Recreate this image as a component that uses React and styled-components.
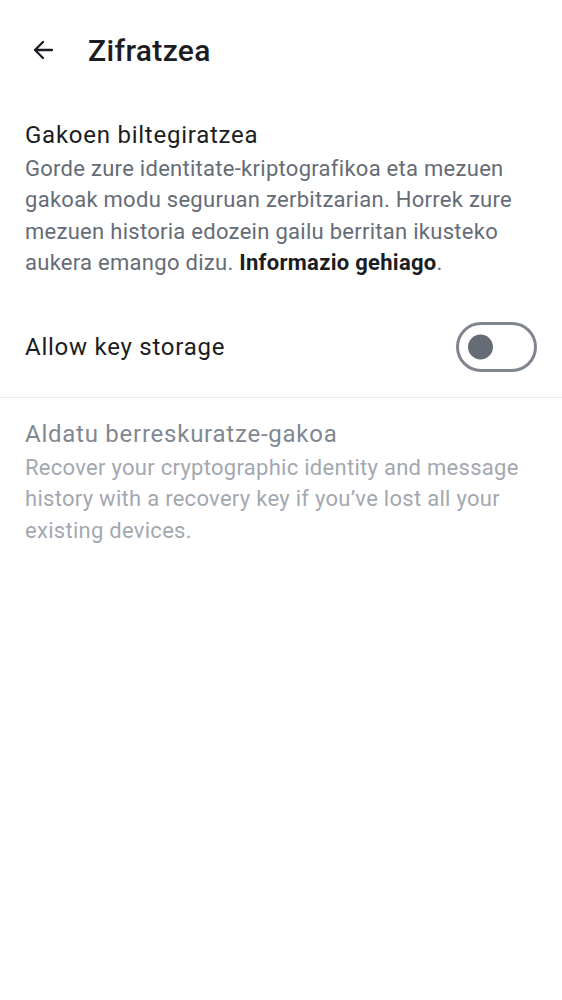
import React, { useState } from "react";
import styled, { createGlobalStyle } from "styled-components";

const GlobalStyle = createGlobalStyle`
  html, body {
    margin: 0;
    padding: 0;
    background: #ffffff;
  }
  body {
    font-family: Roboto, "Noto Sans", sans-serif;
    color: #1b1d22;
  }
`;

export default function App() {
  const [allowStorage, setAllowStorage] = useState(false);

  return (
    <Screen>
      <GlobalStyle />
      <TopBar>
        <BackButton aria-label="Back">
          <svg width="24" height="24" viewBox="0 0 24 24" fill="none">
            <path
              d="M21 12H4M12 4l-8 8 8 8"
              stroke="#1b1d22"
              strokeWidth="2.3"
              strokeLinecap="round"
              strokeLinejoin="round"
            />
          </svg>
        </BackButton>
        <Title>Zifratzea</Title>
      </TopBar>

      <Section>
        <Heading>Gakoen biltegiratzea</Heading>
        <Body>
          Gorde zure identitate-kriptografikoa eta mezuen gakoak modu
          seguruan zerbitzarian. Horrek zure mezuen historia edozein gailu
          berritan ikusteko aukera emango dizu.{" "}
          <Strong>Informazio gehiago</Strong>.
        </Body>
      </Section>

      <ToggleRow>
        <RowLabel>Allow key storage</RowLabel>
        <Switch
          $on={allowStorage}
          onClick={() => setAllowStorage(!allowStorage)}
          aria-label="Allow key storage"
        >
          <Knob $on={allowStorage} />
        </Switch>
      </ToggleRow>

      <Divider />

      <Section $disabled>
        <Heading $disabled>Aldatu berreskuratze-gakoa</Heading>
        <Body $disabled>
          Recover your cryptographic identity and message history with a
          recovery key if you’ve lost all your existing devices.
        </Body>
      </Section>
    </Screen>
  );
}

const Screen = styled.div`
  width: 562px;
  min-height: 1000px;
  background: #ffffff;
`;

const TopBar = styled.header`
  display: flex;
  align-items: center;
  height: 100px;
  padding: 0 0 0 31px;
  gap: 33px;
`;

const BackButton = styled.button`
  display: flex;
  align-items: center;
  justify-content: center;
  width: 24px;
  height: 24px;
  padding: 0;
  border: none;
  background: none;
  cursor: pointer;
`;

const Title = styled.h1`
  margin: 0;
  font-size: 30px;
  font-weight: 500;
  letter-spacing: 0.35px;
  color: #1b1d22;
`;

const Section = styled.section`
  padding: ${(p) => (p.$disabled ? "18px" : "17px")} 25px 0;
`;

const Heading = styled.div`
  font-size: 24px;
  line-height: 36px;
  letter-spacing: 0.75px;
  color: ${(p) => (p.$disabled ? "#818892" : "#1b1d22")};
`;

const Body = styled.p`
  margin: 0;
  font-size: 22px;
  line-height: 31.3px;
  letter-spacing: 0.28px;
  color: ${(p) => (p.$disabled ? "#a3a8b0" : "#656c76")};
`;

const Strong = styled.strong`
  font-weight: 700;
  color: #1b1d22;
`;

const ToggleRow = styled.div`
  display: flex;
  align-items: center;
  justify-content: space-between;
  height: 100px;
  margin-top: 19px;
  padding: 0 25px;
`;

const RowLabel = styled.span`
  font-size: 24px;
  letter-spacing: 0.75px;
  color: #1b1d22;
`;

const Switch = styled.button`
  position: relative;
  box-sizing: border-box;
  width: 81px;
  height: 50px;
  padding: 0;
  border-radius: 25px;
  border: 3px solid #80868f;
  background: ${(p) => (p.$on ? "#0b7b54" : "#ffffff")};
  cursor: pointer;
`;

const Knob = styled.span`
  position: absolute;
  top: 50%;
  left: ${(p) => (p.$on ? "41px" : "9px")};
  width: 25px;
  height: 25px;
  border-radius: 50%;
  transform: translateY(-50%);
  background: ${(p) => (p.$on ? "#ffffff" : "#656c76")};
`;

const Divider = styled.hr`
  margin: 0;
  border: none;
  border-top: 1px solid #e9eaec;
`;
